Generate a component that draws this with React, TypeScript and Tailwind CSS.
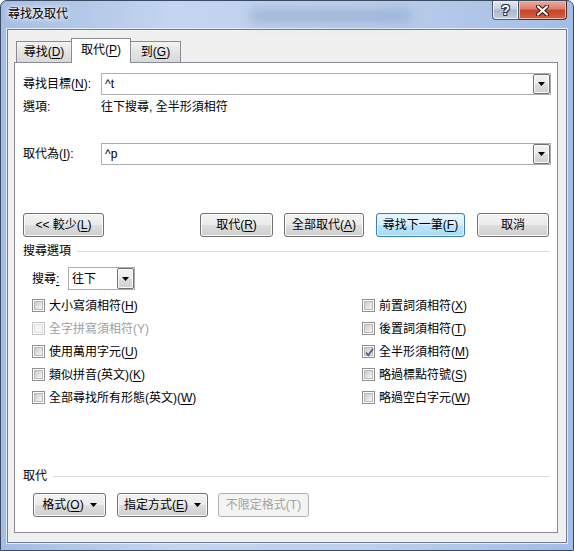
import React from 'react';

const FONT = "[font-family:'Liberation_Sans','Noto_Sans_CJK_TC',sans-serif]";

function Arrow() {
  return (
    <svg width="7" height="4" viewBox="0 0 7 4">
      <path d="M0 0h7L3.5 4z" fill="#000" />
    </svg>
  );
}

function Combo({ value, className }: { value: string; className: string }) {
  return (
    <div className={`flex h-[22px] items-stretch border border-[#abadb3] bg-white ${className}`}>
      <div className="flex flex-1 items-center pl-[3px] text-[12px] leading-none">{value}</div>
      <div className="flex w-[17px] items-center justify-center rounded-[2px] border border-[#707070] bg-[linear-gradient(to_bottom,#f2f2f2_0%,#ebebeb_50%,#dddddd_50%,#cfcfcf_100%)] shadow-[inset_0_0_0_1px_#fbfbfb]">
        <Arrow />
      </div>
    </div>
  );
}

function Btn({
  children,
  className,
  focused,
  disabled,
}: {
  children: React.ReactNode;
  className: string;
  focused?: boolean;
  disabled?: boolean;
}) {
  const look = focused
    ? 'border-[#3c7fb1] bg-[linear-gradient(to_bottom,#eaf6fd_0%,#d9f0fc_50%,#bee6fd_50%,#a7d9f5_100%)] shadow-[inset_0_0_0_1px_#dff3fd]'
    : disabled
      ? 'border-[#adb2b5] bg-[#f4f4f4] text-[#a3a3a3]'
      : 'border-[#707070] bg-[linear-gradient(to_bottom,#f2f2f2_0%,#ebebeb_50%,#dddddd_50%,#cfcfcf_100%)] shadow-[inset_0_0_0_1px_#fbfbfb]';
  return (
    <div className={`flex h-[24px] items-center justify-center gap-[6px] rounded-[3px] border text-[12px] leading-none ${look} ${className}`}>
      {children}
    </div>
  );
}

function Key({ k }: { k: string }) {
  return (
    <>
      (<span className="underline underline-offset-[2px]">{k}</span>)
    </>
  );
}

function Check({ label, k, checked, disabled }: { label: string; k: string; checked?: boolean; disabled?: boolean }) {
  return (
    <div className="flex h-[23px] items-center gap-[4px]">
      <div
        className={`relative flex h-[13px] w-[13px] items-center justify-center border bg-white ${
          disabled ? 'border-[#c4c4c4]' : 'border-[#8e8f8f]'
        }`}
      >
        <div
          className={`h-[9px] w-[9px] border ${
            disabled
              ? 'border-[#e0e0e0] bg-[#f4f4f4]'
              : 'border-[#b8b8b8] bg-[linear-gradient(135deg,#cbcbcb,#f6f6f6)]'
          }`}
        />
        {checked && (
          <svg className="absolute left-[1px] top-[1px]" width="11" height="11" viewBox="0 0 11 11">
            <path d="M2 5.5 L4.3 8.3 L9 1.8" fill="none" stroke="#4c5f94" strokeWidth="1.8" />
          </svg>
        )}
      </div>
      <span className={`text-[12px] leading-none ${disabled ? 'text-[#a0a0a0]' : 'text-black'}`}>
        {label}
        {disabled ? `(${k})` : <Key k={k} />}
      </span>
    </div>
  );
}

function Group({ title }: { title: string }) {
  return (
    <div className="flex h-[14px] items-center pr-px">
      <span className="text-[12px] leading-none">{title}</span>
      <div className="ml-[6px] h-px flex-1 bg-[#d5dfe5]" />
    </div>
  );
}

export default function App() {
  return (
    <div
      className={`relative h-[551px] w-[574px] overflow-hidden rounded-t-[7px] border border-[#3a4a62] bg-[linear-gradient(to_right,#a5bde3,#c3d5ef_30%,#bccfeb_65%,#a3bde6)] text-black ${FONT}`}
    >
      {/* blurred desktop behind the glass */}
      <div className="pointer-events-none absolute left-[250px] top-[8px] h-[14px] w-[160px] bg-[#8aa3c9] opacity-60 blur-[6px]" />

      {/* title bar */}
      <div className="relative flex h-[28px] items-start justify-between">
        <div className="pl-[7px] pt-[7px] text-[12px] leading-none [text-shadow:0_0_8px_#ffffff,0_0_4px_#ffffff]">
          尋找及取代
        </div>
        <div className="mr-[6px] flex h-[19px]">
          <div className="flex w-[27px] items-center justify-center rounded-bl-[4px] border border-t-0 border-[#4f5b6e] bg-[linear-gradient(to_bottom,#e3e9f3_0%,#c6d1e2_45%,#a9b7cd_50%,#c2cfe2_100%)] shadow-[inset_0_0_0_1px_#eef2f8]">
            <span className="text-[14px] font-bold leading-none text-white [text-shadow:0_0_1px_#2d3440,1px_1px_0_#2d3440,-1px_-1px_0_#2d3440,1px_-1px_0_#2d3440,-1px_1px_0_#2d3440]">
              ?
            </span>
          </div>
          <div className="flex w-[48px] items-center justify-center rounded-br-[4px] border border-l-0 border-t-0 border-[#5a2a22] bg-[linear-gradient(to_bottom,#eaab9b_0%,#d9806a_45%,#c5432a_50%,#d8603f_100%)] shadow-[inset_0_0_0_1px_#f0b9a8]">
            <svg width="13" height="11" viewBox="0 0 13 11">
              <path d="M2 1.5 L11 9.5 M11 1.5 L2 9.5" stroke="#3b1710" strokeWidth="4.2" strokeLinecap="round" />
              <path d="M2 1.5 L11 9.5 M11 1.5 L2 9.5" stroke="#ffffff" strokeWidth="2.2" strokeLinecap="round" />
            </svg>
          </div>
        </div>
      </div>

      {/* client area */}
      <div className="mx-[6px] h-[514px] border border-[#6c7d96] bg-[#f0f0f0] shadow-[0_0_0_1px_#e4ecf7]">
        {/* tabs */}
        <div className="relative z-10 -mb-px flex items-end pl-[8px] pt-[8px]">
          <div className="mb-px flex h-[21px] w-[56px] items-center justify-center border border-b-0 border-[#898c95] bg-[linear-gradient(to_bottom,#f3f3f3,#e4e4e4_50%,#d9d9d9)] text-[12px] leading-none">
            尋找<Key k="D" />
          </div>
          <div className="-ml-px flex h-[25px] w-[60px] items-center justify-center border border-b-0 border-[#898c95] bg-white pb-[2px] text-[12px] leading-none">
            取代<Key k="P" />
          </div>
          <div className="-ml-px mb-px flex h-[21px] w-[51px] items-center justify-center border border-b-0 border-[#898c95] bg-[linear-gradient(to_bottom,#f3f3f3,#e4e4e4_50%,#d9d9d9)] text-[12px] leading-none">
            到<Key k="G" />
          </div>
        </div>

        {/* tab page */}
        <div className="ml-[6px] h-[471px] w-[544px] border border-[#898c95] bg-white pl-[8px] pr-[6px] pt-[10px]">
          <div className="flex h-[22px] items-center">
            <span className="w-[78px] text-[12px] leading-none">
              尋找目標<Key k="N" />:
            </span>
            <Combo value="^t" className="w-[450px]" />
          </div>
          <div className="mt-[3px] flex h-[18px] items-center text-[12px] leading-none">
            <span className="w-[78px]">選項:</span>
            <span>往下搜尋, 全半形須相符</span>
          </div>
          <div className="mt-[27px] flex h-[22px] items-center">
            <span className="w-[78px] text-[12px] leading-none">
              取代為<Key k="I" />:
            </span>
            <Combo value="^p" className="w-[450px]" />
          </div>

          <div className="mt-[48px] flex">
            <Btn className="w-[81px]">
              <span>
                &lt;&lt; 較少<Key k="L" />
              </span>
            </Btn>
            <Btn className="ml-[96px] w-[73px]">
              <span>
                取代<Key k="R" />
              </span>
            </Btn>
            <Btn className="ml-[11px] w-[80px]">
              <span>
                全部取代<Key k="A" />
              </span>
            </Btn>
            <Btn className="ml-[12px] w-[89px]" focused>
              <span>
                尋找下一筆<Key k="F" />
              </span>
            </Btn>
            <Btn className="ml-[12px] w-[72px]">取消</Btn>
          </div>

          <div className="mt-[7px]">
            <Group title="搜尋選項" />
          </div>

          <div className="mt-[9px] flex h-[23px] items-center pl-[9px]">
            <span className="w-[36px] text-[12px] leading-none">
              搜尋<span className="underline underline-offset-[2px]">:</span>
            </span>
            <div className="flex h-[23px] w-[67px] items-stretch border border-[#abadb3] bg-white">
              <div className="flex flex-1 items-center pl-[3px] text-[12px] leading-none">往下</div>
              <div className="flex w-[17px] items-center justify-center rounded-[2px] border border-[#707070] bg-[linear-gradient(to_bottom,#f2f2f2_0%,#ebebeb_50%,#dddddd_50%,#cfcfcf_100%)] shadow-[inset_0_0_0_1px_#fbfbfb]">
                <Arrow />
              </div>
            </div>
          </div>

          <div className="mt-[4px] grid grid-cols-[330px_1fr] pl-[9px]">
            <Check label="大小寫須相符" k="H" />
            <Check label="前置詞須相符" k="X" />
            <Check label="全字拼寫須相符" k="Y" disabled />
            <Check label="後置詞須相符" k="T" />
            <Check label="使用萬用字元" k="U" />
            <Check label="全半形須相符" k="M" checked />
            <Check label="類似拼音(英文)" k="K" />
            <Check label="略過標點符號" k="S" />
            <Check label="全部尋找所有形態(英文)" k="W" />
            <Check label="略過空白字元" k="W" />
          </div>

          <div className="mt-[60px]">
            <Group title="取代" />
          </div>

          <div className="mt-[10px] flex pl-[10px]">
            <Btn className="h-[23px] w-[73px]">
              <span>
                格式<Key k="O" />
              </span>
              <Arrow />
            </Btn>
            <Btn className="ml-[11px] h-[23px] w-[91px]">
              <span>
                指定方式<Key k="E" />
              </span>
              <Arrow />
            </Btn>
            <Btn className="ml-[10px] h-[23px] w-[91px]" disabled>
              不限定格式(T)
            </Btn>
          </div>
        </div>
      </div>
    </div>
  );
}
